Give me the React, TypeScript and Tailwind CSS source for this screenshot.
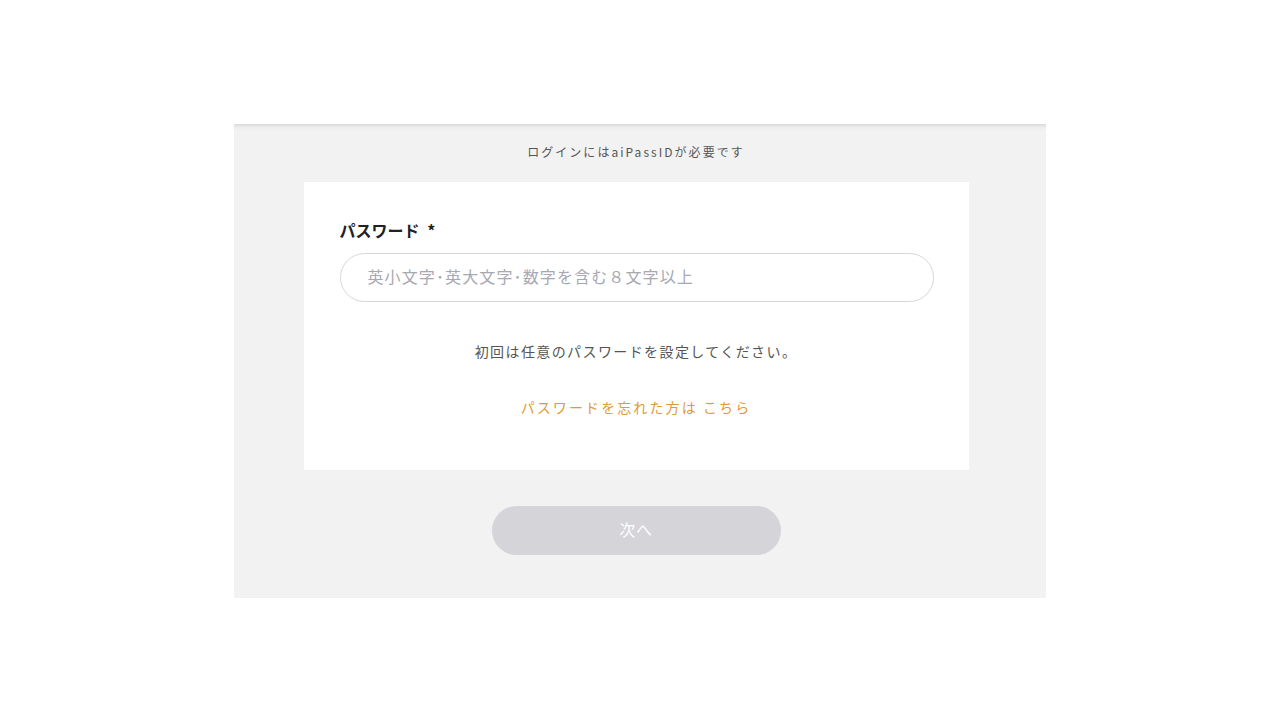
import React from "react";

export default function App() {
  return (
    <div
      className="w-[1280px] h-[720px] bg-white flex flex-col items-center pt-[124px]"
      style={{ fontFamily: '"Noto Sans CJK JP", "Noto Sans", sans-serif' }}
    >
      <div className="w-[812px] h-[474px] bg-[linear-gradient(to_bottom,#d9d9d9,#ececec_3px,#f2f2f2_7px)] pr-[8px] flex flex-col items-center">
        <p className="mt-[19px] text-[12px] leading-[18px] tracking-[0.17em] text-[#555]">
          ログインにはaiPassIDが必要です
        </p>
        <div className="mt-[21px] w-[665px] h-[288px] bg-white flex flex-col px-[36px] pt-[36px]">
          <label className="text-[16px] leading-[24px] font-bold text-[#222]">
            パスワード <span className="ml-1">*</span>
          </label>
          <input
            type="password"
            placeholder="英小文字･英大文字･数字を含む８文字以上"
            className="mt-[11px] w-[594px] h-[49px] rounded-full border border-[#d6d6de] px-[27px] pb-[4px] text-[16px] tracking-[0.07em] placeholder:text-[#a8a8b2] outline-none"
          />
          <p className="mt-[38px] text-center text-[14px] leading-[22px] tracking-[0.1em] text-[#555]">
            初回は任意のパスワードを設定してください。
          </p>
          <p className="mt-[34px] text-center text-[14px] leading-[22px] tracking-[0.15em] text-[#e09a3a]">
            パスワードを忘れた方は こちら
          </p>
        </div>
        <button className="mt-[36px] w-[289px] h-[49px] rounded-full bg-[#d4d4d9] text-white text-[16px] tracking-[0.04em] pb-[4px]">
          次へ
        </button>
      </div>
    </div>
  );
}
